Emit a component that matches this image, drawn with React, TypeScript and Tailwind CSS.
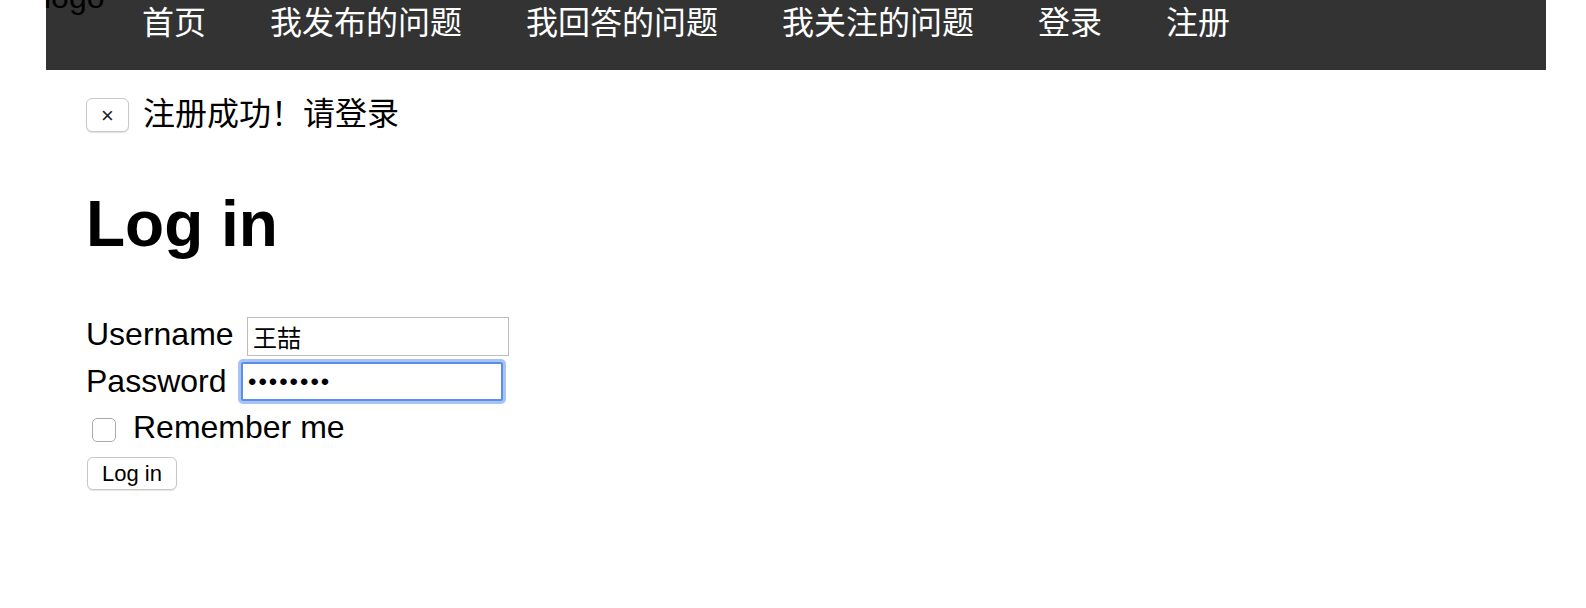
import React from 'react'

const navItems = ['首页', '我发布的问题', '我回答的问题', '我关注的问题', '登录', '注册']

export default function App() {
  return (
    <div className="min-h-[608px] w-[1586px] bg-white text-black font-['Liberation_Sans','Noto_Sans_CJK_SC',sans-serif]">
      {/* top nav */}
      <nav className="relative ml-[46px] h-[70px] w-[1500px] bg-[#333333]">
        <span className="absolute left-[-2px] top-[-19px] text-[32px] leading-[32px] text-black">logo</span>
        <ul className="flex gap-[64px] pl-[96px] pt-[4px]">
          {navItems.map((item) => (
            <li key={item} className="text-[32px] leading-[32px] text-white font-['Noto_Sans_CJK_SC',sans-serif]">
              {item}
            </li>
          ))}
        </ul>
      </nav>

      <div className="pl-[86px]">
        {/* flash message */}
        <div className="mt-[28px] flex h-[34px] items-center">
          <button className="flex h-[34px] w-[43px] items-center justify-center rounded-[6px] border border-[#c9c9c9] bg-white pt-[2px] text-[22px] leading-none text-[#222] shadow-[0_1px_1px_rgba(0,0,0,0.12)]">
            ×
          </button>
          <span className="ml-[14px] mt-[-3px] self-start text-[32px] leading-[32px] font-['Noto_Sans_CJK_SC',sans-serif]">注册成功！请登录</span>
        </div>

        <h1 className="mt-[60px] text-[64px] font-bold leading-[64px]">Log in</h1>

        <form onSubmit={(e) => e.preventDefault()}>
          <div className="mt-[61px] flex h-[39px] items-start">
            <label className="mt-[1px] w-[161px] text-[32px] leading-[32px]">Username</label>
            <input
              type="text"
              defaultValue="王喆"
              className="h-[39px] w-[262px] border border-[#bdbdbd] bg-white pl-[5px] text-[24px] text-black outline-none font-['Noto_Sans_CJK_SC',sans-serif]"
            />
          </div>
          <div className="mt-[6px] flex h-[39px] items-start">
            <label className="mt-[3px] w-[155px] text-[32px] leading-[32px]">Password</label>
            <input
              type="password"
              defaultValue="12345678"
              className="h-[39px] w-[262px] rounded-[2px] border-2 border-[#5b8def] bg-white pl-[5px] text-[24px] tracking-[2px] text-black outline-none shadow-[0_0_0_3px_#a8c4f6]"
            />
          </div>
          <div className="mt-[9px] flex h-[32px] items-start">
            <span className="ml-[6px] mt-[8px] block h-[24px] w-[24px] rounded-[5px] border border-[#ababab] bg-white"></span>
            <label className="ml-[17px] mt-[1px] text-[32px] leading-[32px]">Remember me</label>
          </div>
          <div className="mt-[15px] flex">
            <button
              type="submit"
              className="ml-[1px] h-[33px] w-[90px] rounded-[6px] border border-[#c6c6c6] bg-white text-[22px] leading-none text-black shadow-[0_1px_1px_rgba(0,0,0,0.1)]"
            >
              Log in
            </button>
          </div>
        </form>
      </div>
    </div>
  )
}
